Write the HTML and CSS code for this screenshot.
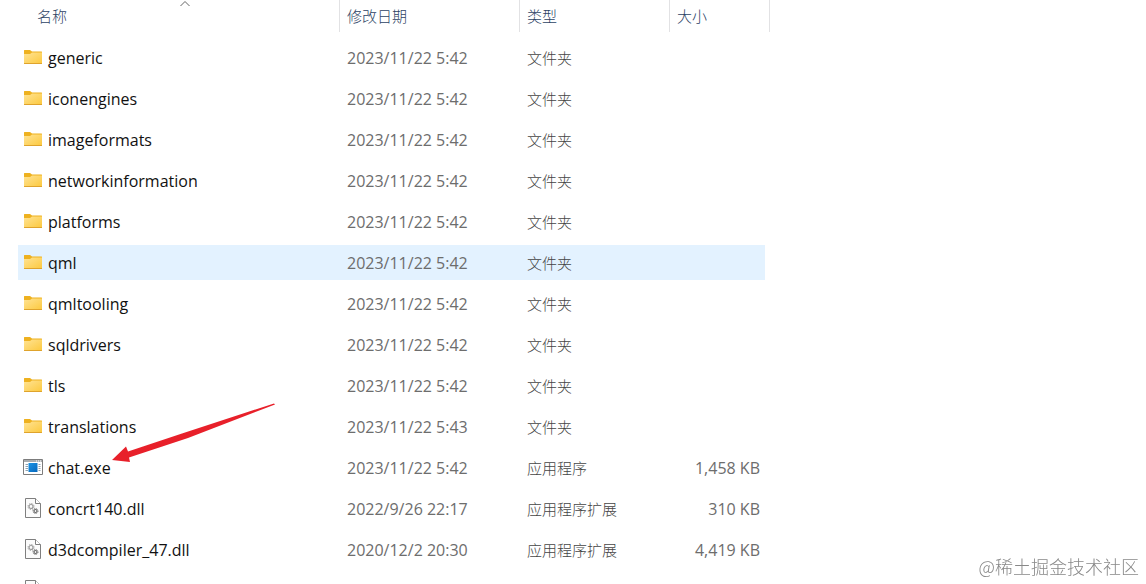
FILE: index.html
```html
<!DOCTYPE html>
<html lang="zh-CN">
<head>
    <meta charset="UTF-8">
    <title>文件列表</title>
    <link rel="stylesheet" href="styles.css">
</head>
<body>
<svg class="defs" aria-hidden="true">
    <defs>
        <linearGradient id="front" x1="0" y1="0" x2="1" y2="1">
            <stop offset="0" stop-color="#ffe394"/>
            <stop offset="1" stop-color="#fcc93f"/>
        </linearGradient>
        <linearGradient id="blue" x1="0" y1="0" x2="1" y2="1">
            <stop offset="0" stop-color="#1c93e4"/>
            <stop offset="1" stop-color="#0668bd"/>
        </linearGradient>
        <symbol id="folder" viewBox="0 0 20 20">
            <path d="M1 3.5q0-.5.5-.5H7l2 1.5H18.500q.5 0 .5.500V10H1z" fill="#eeb11f"/>
            <path d="M1 7h6l2-1.500h10V16.500H1z" fill="url(#front)"/>
            <path d="M1 16h18v.5q0 .5-.5.5h-17q-.5 0-.5-.5z" fill="#dfa32c"/>
        </symbol>
        <symbol id="exe" viewBox="0 0 20 20">
            <path d="M.5 2.500h19v15H.5z" fill="#fff" stroke="#7c7c7c"/>
            <path d="M1 3h18v2H1z" fill="#a9adb0"/>
            <path d="M13 4h1M15 4h1M17 4h1" stroke="#fff"/>
            <path d="M2.500 7.500H5M2.500 9.500H5M2.500 11.500H5M2.500 13.500H5M15.500 7.500h2M15.500 9.500h2M15.500 11.500h2M15.500 13.500h2" stroke="#8fa3b2"/>
            <path d="M5.500 6h9v9h-9z" fill="url(#blue)"/>
        </symbol>
        <symbol id="dll" viewBox="0 0 20 20">
            <path d="M2.500.5h10l5 5v14h-15z" fill="#fbfbfb" stroke="#7f7f7f"/>
            <path d="M12.500.5v5h5" fill="#fff" stroke="#7f7f7f"/>
            <circle cx="8" cy="8.500" r="2" fill="none" stroke="#999" stroke-width="1.200"/>
            <circle cx="8" cy="8.500" r="3" fill="none" stroke="#999" stroke-width="1" stroke-dasharray="1.200 1.156"/>
            <circle cx="12.500" cy="13" r="1.500" fill="none" stroke="#666" stroke-width="1.200"/>
            <circle cx="12.500" cy="13" r="2.500" fill="none" stroke="#666" stroke-width="1" stroke-dasharray="1 .963"/>
        </symbol>
    </defs>
</svg>

<table class="files">
    <colgroup>
        <col class="col-name">
        <col class="col-date">
        <col class="col-type">
        <col class="col-size">
    </colgroup>
    <thead>
    <tr>
        <th aria-sort="ascending">
            <button type="button" class="sort first">名称
                <svg class="caret" viewBox="0 0 12 8" aria-hidden="true"><path d="M1.500 6L6 1.500l4.500 4.500"/></svg>
            </button>
        </th>
        <th><button type="button" class="sort">修改日期</button></th>
        <th><button type="button" class="sort">类型</button></th>
        <th><button type="button" class="sort">大小</button></th>
    </tr>
    </thead>
    <tbody>
    <tr>
        <td><div class="name"><svg class="icon"><use href="#folder"/></svg>generic</div></td>
        <td>2023/11/22 5:42</td><td class="type">文件夹</td><td></td>
    </tr>
    <tr>
        <td><div class="name"><svg class="icon"><use href="#folder"/></svg>iconengines</div></td>
        <td>2023/11/22 5:42</td><td class="type">文件夹</td><td></td>
    </tr>
    <tr>
        <td><div class="name"><svg class="icon"><use href="#folder"/></svg>imageformats</div></td>
        <td>2023/11/22 5:42</td><td class="type">文件夹</td><td></td>
    </tr>
    <tr>
        <td><div class="name"><svg class="icon"><use href="#folder"/></svg>networkinformation</div></td>
        <td>2023/11/22 5:42</td><td class="type">文件夹</td><td></td>
    </tr>
    <tr>
        <td><div class="name"><svg class="icon"><use href="#folder"/></svg>platforms</div></td>
        <td>2023/11/22 5:42</td><td class="type">文件夹</td><td></td>
    </tr>
    <tr class="active">
        <td><div class="name"><svg class="icon"><use href="#folder"/></svg>qml</div></td>
        <td>2023/11/22 5:42</td><td class="type">文件夹</td><td></td>
    </tr>
    <tr>
        <td><div class="name"><svg class="icon"><use href="#folder"/></svg>qmltooling</div></td>
        <td>2023/11/22 5:42</td><td class="type">文件夹</td><td></td>
    </tr>
    <tr>
        <td><div class="name"><svg class="icon"><use href="#folder"/></svg>sqldrivers</div></td>
        <td>2023/11/22 5:42</td><td class="type">文件夹</td><td></td>
    </tr>
    <tr>
        <td><div class="name"><svg class="icon"><use href="#folder"/></svg>tls</div></td>
        <td>2023/11/22 5:42</td><td class="type">文件夹</td><td></td>
    </tr>
    <tr>
        <td><div class="name"><svg class="icon"><use href="#folder"/></svg>translations</div></td>
        <td>2023/11/22 5:43</td><td class="type">文件夹</td><td></td>
    </tr>
    <tr>
        <td>
            <div class="name"><svg class="icon"><use href="#exe"/></svg>chat.exe
                <svg class="arrow" viewBox="0 0 164 60" aria-hidden="true"><path d="M0 57L14 43.500 16 48.500 70 30.500 162 0.500 163 1.500 76 35 17 54.500 18 59z"/></svg>
            </div>
        </td>
        <td>2023/11/22 5:42</td><td class="type">应用程序</td><td>1,458 KB</td>
    </tr>
    <tr>
        <td><div class="name"><svg class="icon"><use href="#dll"/></svg>concrt140.dll</div></td>
        <td>2022/9/26 22:17</td><td class="type">应用程序扩展</td><td>310 KB</td>
    </tr>
    <tr>
        <td><div class="name"><svg class="icon"><use href="#dll"/></svg>d3dcompiler_47.dll</div></td>
        <td>2020/12/2 20:30</td><td class="type">应用程序扩展</td><td>4,419 KB</td>
    </tr>
    <tr>
        <td><div class="name"><svg class="icon"><use href="#dll"/></svg></div></td>
        <td></td><td></td><td></td>
    </tr>
    </tbody>
</table>

<div class="watermark">@稀土掘金技术社区</div>
</body>
</html>
```
FILE: styles.css
```css
* {
    box-sizing: border-box;
    margin: 0;
    padding: 0;
}

body {
    height: 100vh;
    overflow: hidden;
    background: #fff;
    color: #6d6d6d;
    font-family: "Open Sans", "Noto Sans CJK SC", sans-serif;
    font-size: 16px;
    line-height: 20px;
}

.defs {
    display: block;
    width: 0;
    height: 0;
}

.files {
    margin-left: 18px;
    table-layout: fixed;
    width: 752px;
    border-spacing: 0;
}

.col-name {
    width: 322px;
}

.col-date {
    width: 180px;
}

.col-type {
    width: 150px;
}

.col-size {
    width: 100px;
}

/* header */
th {
    padding-bottom: 5px;
}

.sort {
    display: block;
    position: relative;
    width: 100%;
    height: 32px;
    padding-left: 7px;
    border: 0;
    border-right: 1px solid #e2e2e4;
    background: none;
    color: #2c4264;
    font-family: "Noto Sans CJK SC", sans-serif;
    font-size: 15px;
    font-weight: 300;
    line-height: 20px;
    text-align: left;
}

.sort.first {
    padding-left: 19px;
}

.caret {
    position: absolute;
    top: 0;
    left: 50%;
    width: 12px;
    height: 8px;
    fill: none;
    stroke: #666;
}

/* rows */
td {
    height: 41px;
    padding: 0 0 0 7px;
    border: solid transparent;
    border-width: 3px 0;
    background-clip: padding-box;
    white-space: nowrap;
}

td:first-child {
    padding-left: 5px;
}

td:last-child {
    padding-right: 5px;
    border-right-width: 5px;
    text-align: right;
}

.type {
    color: #444;
    font-family: "Noto Sans CJK SC", sans-serif;
    font-size: 15px;
    font-weight: 300;
}

.active td {
    background-color: #e3f2ff;
}

.name {
    display: flex;
    align-items: center;
    gap: 5px;
    position: relative;
    color: #111;
}

.icon {
    width: 20px;
    height: 20px;
    margin-bottom: 2px;
}

.arrow {
    position: absolute;
    left: 89px;
    bottom: 16px;
    width: 164px;
    height: 60px;
    fill: #e8202a;
}

.watermark {
    position: fixed;
    right: 7px;
    bottom: 6px;
    color: #888;
    font-family: "Noto Sans CJK SC", sans-serif;
    font-size: 18px;
    font-weight: 300;
    line-height: 24px;
}
```
